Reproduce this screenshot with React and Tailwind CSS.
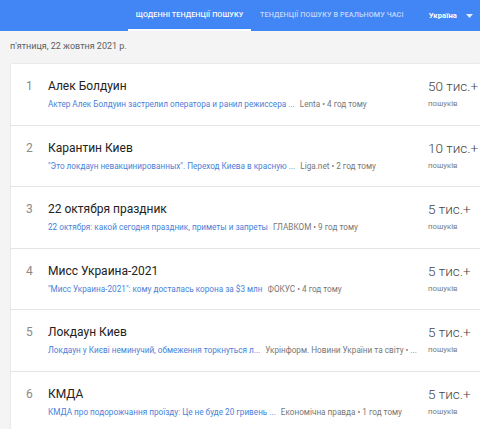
const TRENDS = [
  { n: 1, title: 'Алек Болдуин', news: 'Актер Алек Болдуин застрелил оператора и ранил режиссера ...', source: 'Lenta • 4 год тому', count: '50 тис.+' },
  { n: 2, title: 'Карантин Киев', news: '"Это локдаун невакцинированных". Переход Киева в красную ...', source: 'Liga.net • 2 год тому', count: '10 тис.+' },
  { n: 3, title: '22 октября праздник', news: '22 октября: какой сегодня праздник, приметы и запреты', source: 'ГЛАВКОМ • 9 год тому', count: '5 тис.+' },
  { n: 4, title: 'Мисс Украина-2021', news: '"Мисс Украина-2021": кому досталась корона за $3 млн', source: 'ФОКУС • 4 год тому', count: '5 тис.+' },
  { n: 5, title: 'Локдаун Киев', news: 'Локдаун у Києві неминучий, обмеження торкнуться л...', source: 'Укрінформ. Новини України та світу • ...', count: '5 тис.+' },
  { n: 6, title: 'КМДА', news: 'КМДА про подорожчання проїзду: Це не буде 20 гривень ...', source: 'Економічна правда • 1 год тому', count: '5 тис.+' },
];

function TrendRow({ t, last }) {
  return (
    <div className={'flex h-[61.5px] ' + (last ? '' : 'border-b border-[#e4e4e4]')}>
      <div className="w-[37px] pl-[15px] pt-[13px] text-[12px] leading-[18px] text-[#8a8a8a]">{t.n}</div>
      <div className="flex-1 min-w-0 overflow-hidden pt-[13px] pr-[8px]">
        <div className="text-[12px] leading-[18px] text-[#222]">{t.title}</div>
        <div className="flex items-center gap-[5px] mt-[3px] whitespace-nowrap text-[8.2px] leading-[12px]">
          <span className="text-[#4a7fd8] shrink-0">{t.news}</span>
          <span className="text-[#777] truncate">{t.source}</span>
        </div>
      </div>
      <div className="w-[52px] shrink-0 pt-[12px] whitespace-nowrap">
        <div className="text-[13.5px] leading-[20px] font-light text-[#444]">{t.count}</div>
        <div className="text-[7.8px] leading-[12px] mt-[2px] text-[#7a7a7a]">пошуків</div>
      </div>
    </div>
  );
}

export default function App() {
  return (
    <div className="w-[480px] h-[429px] overflow-hidden bg-[#f4f4f4]" style={{ fontFamily: 'Roboto, "Noto Sans", sans-serif' }}>
      <header className="flex h-[31px] bg-[#4285f4] pl-[128px] text-[7.2px] font-medium tracking-[0.1px]">
        <div className="w-[123px] flex items-center justify-center text-white border-b-2 border-white pt-[2px]">ЩОДЕННІ ТЕНДЕНЦІЇ ПОШУКУ</div>
        <div className="flex items-center pl-[9px] text-white/70">ТЕНДЕНЦІЇ ПОШУКУ В РЕАЛЬНОМУ ЧАСІ</div>
        <div className="ml-auto flex items-center gap-[9px] pr-[7px] text-white font-bold text-[7.6px]">
          <span>Україна</span>
          <svg width="7" height="4" viewBox="0 0 7 4"><path d="M0 0h7L3.5 4z" fill="#fff" fillOpacity="0.85" /></svg>
        </div>
      </header>
      <div className="pl-[10px] pt-[9px] h-[33px] text-[9px] leading-[12px] text-[#5f5f5f]">п'ятниця, 22 жовтня 2021 р.</div>
      <div className="ml-[11px] bg-white shadow-[0_0_2px_rgba(0,0,0,0.12)]">
        {TRENDS.map((t, i) => (
          <TrendRow key={t.n} t={t} last={i === TRENDS.length - 1} />
        ))}
      </div>
    </div>
  );
}
